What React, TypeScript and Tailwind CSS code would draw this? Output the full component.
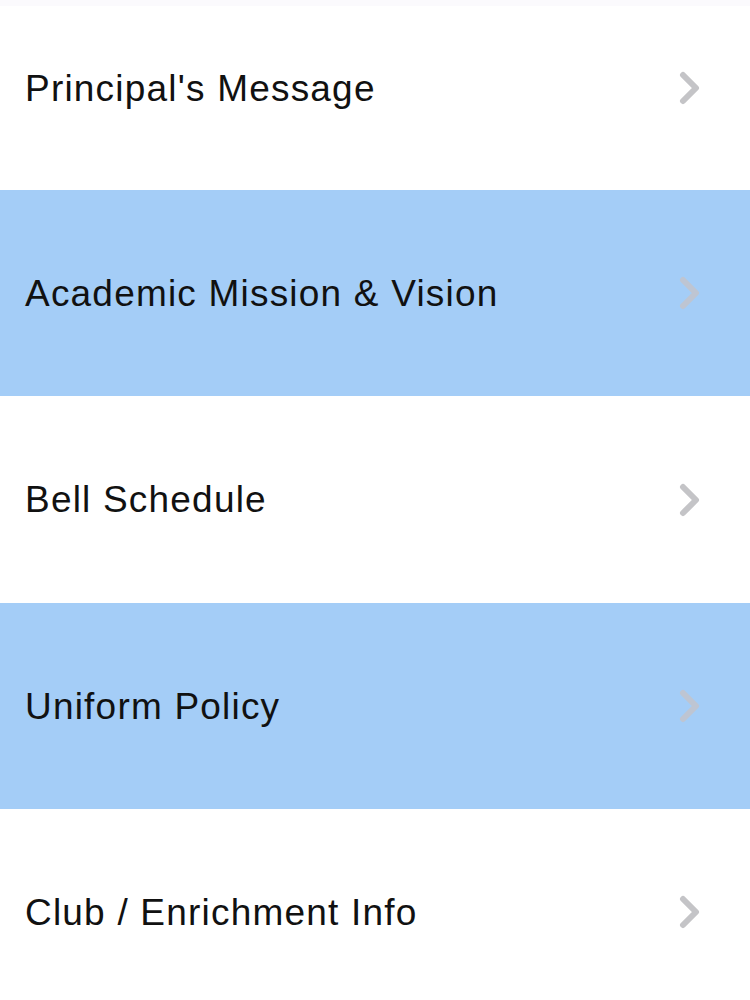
import React from "react";

const items = [
  { label: "Principal's Message", blue: false },
  { label: "Academic Mission & Vision", blue: true },
  { label: "Bell Schedule", blue: false },
  { label: "Uniform Policy", blue: true },
  { label: "Club / Enrichment Info", blue: false },
];

function Chevron({ blue }: { blue: boolean }) {
  return (
    <svg width="24" height="34" viewBox="0 0 24 34" className="shrink-0">
      <path
        d="M5 4 L18 17 L5 30"
        fill="none"
        stroke={blue ? "#bec5d2" : "#c4c4c7"}
        strokeWidth="6"
        strokeLinecap="round"
        strokeLinejoin="round"
      />
    </svg>
  );
}

export default function App() {
  return (
    <div className="w-[750px] h-[1000px] overflow-hidden bg-white" style={{ fontFamily: '"Liberation Sans", Arial, sans-serif' }}>
      <div className="h-[6px] bg-[#fbfafd]" />
      {items.map((it, i) => (
        <div
          key={i}
          className={`flex items-center justify-between pl-[25px] pr-[48px] ${
            i === 0 ? "h-[184px] pb-[20px]" : i === 2 ? "h-[207px]" : "h-[206px]"
          } ${it.blue ? "bg-[#a4cdf7]" : "bg-white"}`}
        >
          <span className="text-[37px] text-[#111111] leading-none tracking-[1.2px]">{it.label}</span>
          <Chevron blue={it.blue} />
        </div>
      ))}
    </div>
  );
}
